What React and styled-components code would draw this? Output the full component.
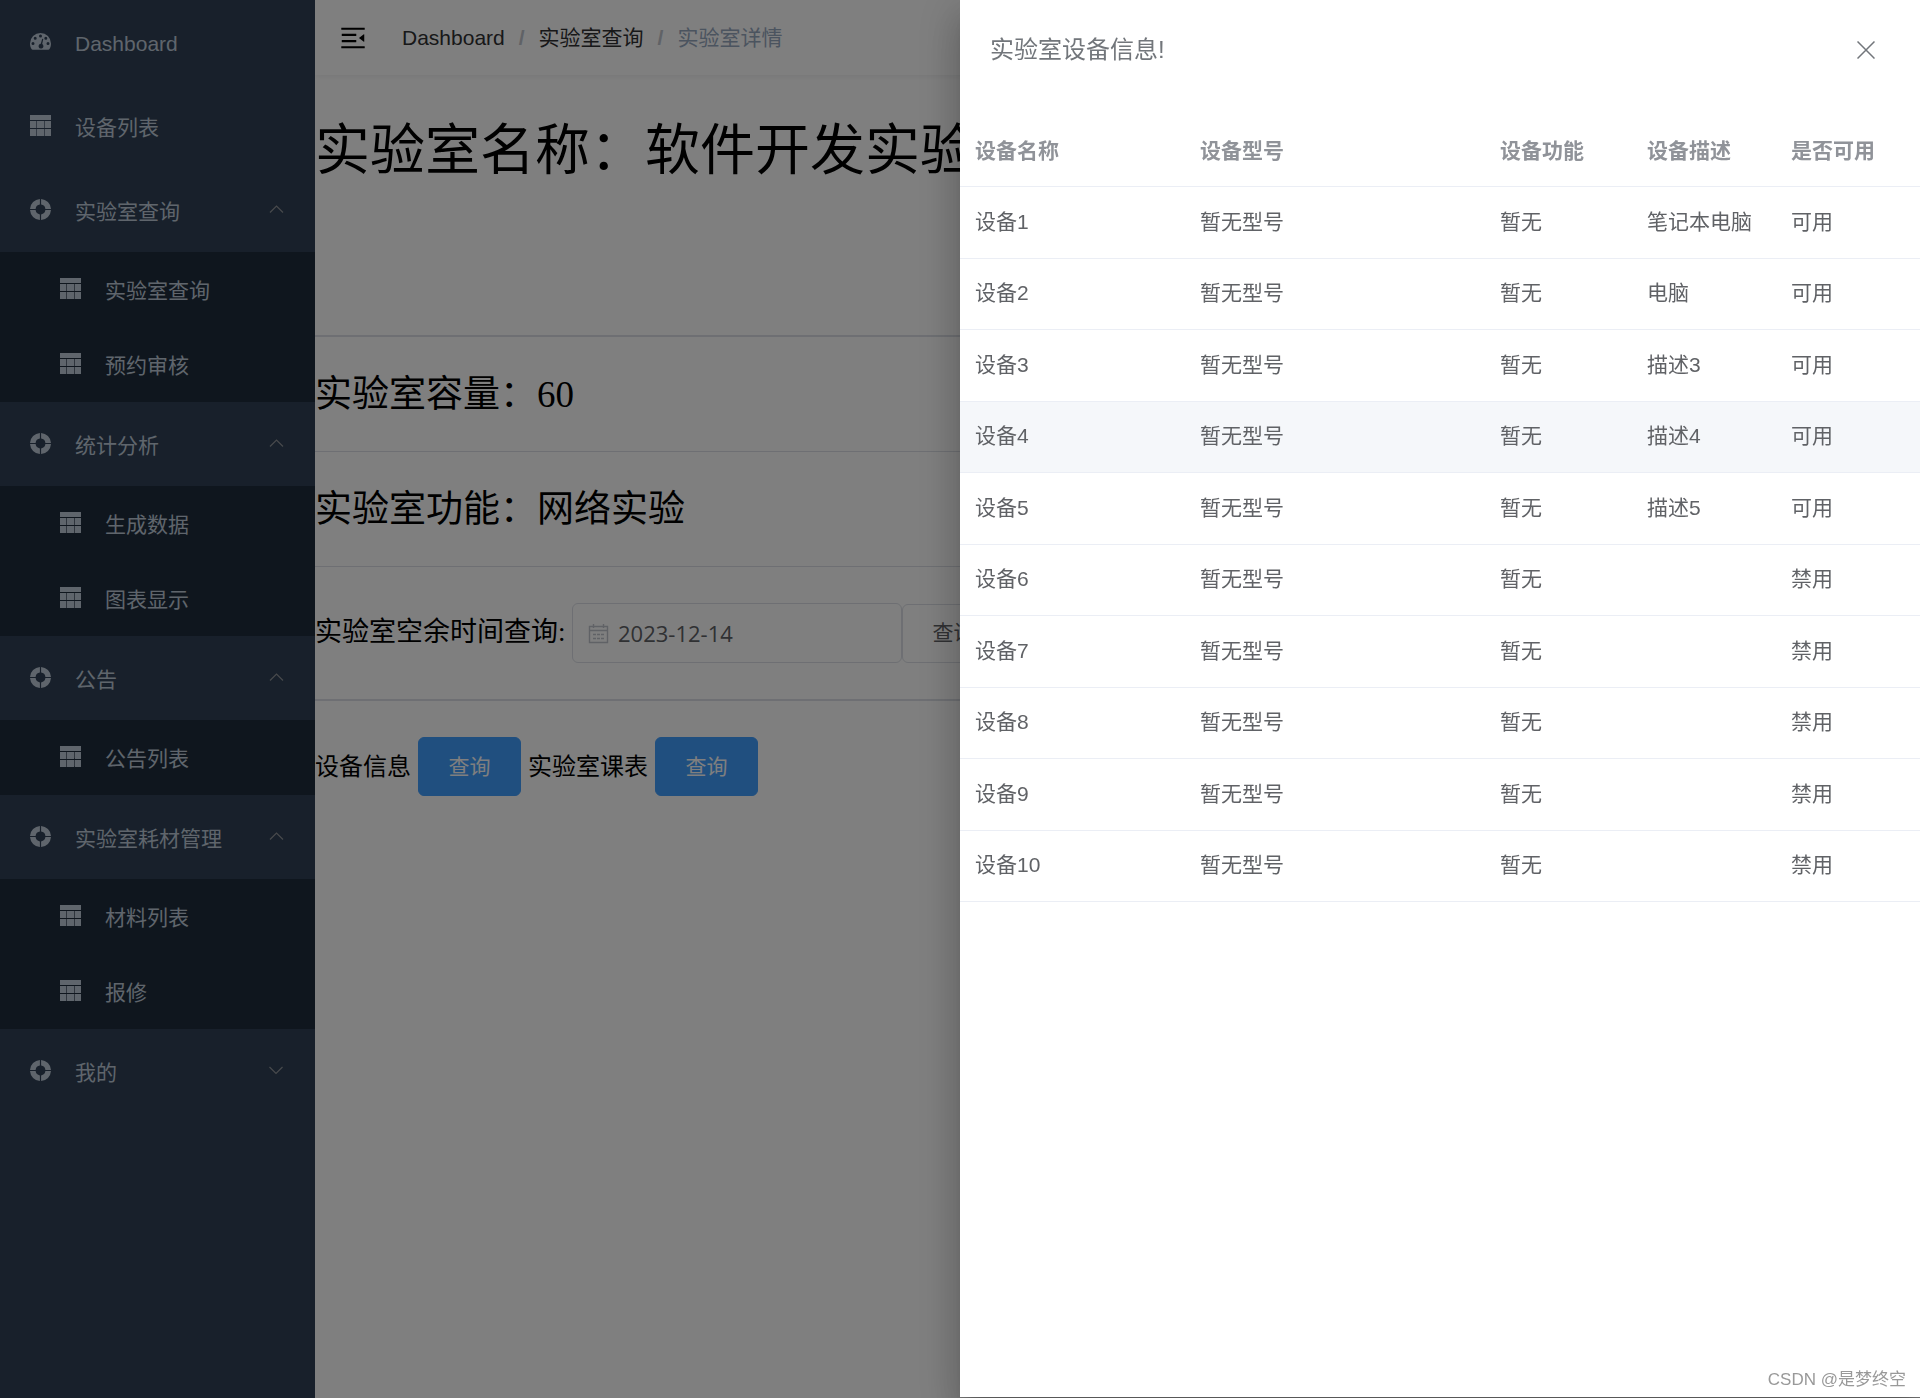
import React, { useState } from "react";
import styled, { createGlobalStyle, css } from "styled-components";

const menu = [
    { title: "Dashboard", icon: "dashboard" },
    { title: "设备列表", icon: "table" },
    { title: "实验室查询", icon: "help", open: true, children: ["实验室查询", "预约审核"] },
    { title: "统计分析", icon: "help", open: true, children: ["生成数据", "图表显示"] },
    { title: "公告", icon: "help", open: true, children: ["公告列表"] },
    { title: "实验室耗材管理", icon: "help", open: true, children: ["材料列表", "报修"] },
    { title: "我的", icon: "help", open: false, children: [] },
];

const devices = [
    { name: "设备1", model: "暂无型号", usage: "暂无", desc: "笔记本电脑", state: "可用" },
    { name: "设备2", model: "暂无型号", usage: "暂无", desc: "电脑", state: "可用" },
    { name: "设备3", model: "暂无型号", usage: "暂无", desc: "描述3", state: "可用" },
    { name: "设备4", model: "暂无型号", usage: "暂无", desc: "描述4", state: "可用", active: true },
    { name: "设备5", model: "暂无型号", usage: "暂无", desc: "描述5", state: "可用" },
    { name: "设备6", model: "暂无型号", usage: "暂无", desc: "", state: "禁用" },
    { name: "设备7", model: "暂无型号", usage: "暂无", desc: "", state: "禁用" },
    { name: "设备8", model: "暂无型号", usage: "暂无", desc: "", state: "禁用" },
    { name: "设备9", model: "暂无型号", usage: "暂无", desc: "", state: "禁用" },
    { name: "设备10", model: "暂无型号", usage: "暂无", desc: "", state: "禁用" },
];

//icons
function DashboardIcon() {
    return (
        <svg viewBox="0 0 21 21" width="21" height="21" fill="currentColor" aria-hidden="true">
            <path
                fillRule="evenodd"
                d="M10.5 2A10.5 10.5 0 0 0 0 12.5c0 2 .5 3.9 1.5 5.6.3.5.7.7 1.2.7h15.6c.5 0 .9-.2 1.2-.7 1-1.7 1.5-3.6 1.5-5.6A10.5 10.5 0 0 0 10.5 2zM10.5 3.6a1.5 1.5 0 1 1 0 3 1.5 1.5 0 0 1 0-3zM5.2 5.8a1.5 1.5 0 1 1 0 3 1.5 1.5 0 0 1 0-3zM15.8 5.8a1.5 1.5 0 1 1 0 3 1.5 1.5 0 0 1 0-3zM3 11a1.5 1.5 0 1 1 0 3 1.5 1.5 0 0 1 0-3zM18 11a1.5 1.5 0 1 1 0 3 1.5 1.5 0 0 1 0-3zM12.2 7.800l1.1.3-1.1 5a2.4 2.4 0 1 1-1.4-.3z"
            />
        </svg>
    );
}

function TableIcon() {
    return (
        <svg viewBox="0 0 21 21" width="21" height="21" fill="currentColor" aria-hidden="true">
            <path d="M0 0h21v5H0zM0 6h6.200v7H0zM6.800 6h7.400v7H6.800zM14.800 6H21v7h-6.200zM0 14h6.200v7H0zM6.800 14h7.400v7H6.800zM14.800 14H21v7h-6.200z" />
        </svg>
    );
}

function HelpIcon() {
    return (
        <svg viewBox="0 0 21 21" width="21" height="21" fill="currentColor" aria-hidden="true">
            <path d="M9.9 0v5.600A5 5 0 0 0 5.600 9.900H0A10.500 10.500 0 0 1 9.900 0zM11.100 0A10.500 10.500 0 0 1 21 9.900h-5.600a5 5 0 0 0-4.300-4.300zM0 11.100h5.600a5 5 0 0 0 4.300 4.300V21A10.500 10.500 0 0 1 0 11.100zM15.400 11.100H21a10.500 10.500 0 0 1-9.900 9.900v-5.600a5 5 0 0 0 4.300-4.300z" />
        </svg>
    );
}

function CalendarIcon() {
    return (
        <svg viewBox="0 0 21 21" width="21" height="21" fill="none" stroke="currentColor" strokeWidth="1.4" aria-hidden="true">
            <path d="M1.500 3.500h18v16h-18zM1.500 7.500h18M5.500 1v4M15.500 1v4" />
            <path d="M5 11.500h3M9 11.500h3M13 11.500h3M5 15.500h3M9 15.500h3M13 15.500h3" />
        </svg>
    );
}

function HamburgerIcon() {
    return (
        <svg viewBox="0 0 1024 1024" width="30" height="30" aria-hidden="true">
            <path
                transform="rotate(180 512 512)"
                d="M408 442h480c4.400 0 8-3.600 8-8v-56c0-4.400-3.600-8-8-8H408c-4.400 0-8 3.600-8 8v56c0 4.400 3.600 8 8 8zm-8 204c0 4.400 3.600 8 8 8h480c4.400 0 8-3.600 8-8v-56c0-4.400-3.600-8-8-8H408c-4.400 0-8 3.600-8 8v56zm504-486H120c-4.400 0-8 3.600-8 8v56c0 4.400 3.600 8 8 8h784c4.400 0 8-3.600 8-8v-56c0-4.400-3.600-8-8-8zm0 632H120c-4.400 0-8 3.600-8 8v56c0 4.400 3.600 8 8 8h784c4.400 0 8-3.600 8-8v-56c0-4.400-3.600-8-8-8zM142.400 642.100L298.700 519a8.840 8.840 0 0 0 0-13.900L142.400 381.900c-5.800-4.600-14.400-.5-14.400 6.900v246.300a8.900 8.900 0 0 0 14.400 7z"
            />
        </svg>
    );
}

function ArrowIcon({ open }) {
    return (
        <svg viewBox="0 0 18 18" width="18" height="18" fill="none" stroke="#909399" strokeWidth="1.2" aria-hidden="true">
            <path d={open ? "M3 12.500L9.500 6l6.500 6.500" : "M2.500 6L9 12.500 15.500 6"} />
        </svg>
    );
}

const icons = { dashboard: DashboardIcon, table: TableIcon, help: HelpIcon };

function Sidebar() {
    const [items, setItems] = useState(menu);

    const toggle = (title) => {
        setItems(items.map((item) => (item.title === title ? { ...item, open: !item.open } : item)));
    };

    return (
        <SidebarStyled>
            {items.map((item) => {
                const Icon = icons[item.icon];
                return item.children ? (
                    <React.Fragment key={item.title}>
                        <MenuItem as="button" type="button" aria-expanded={item.open} onClick={() => toggle(item.title)}>
                            <Icon />
                            <span>{item.title}</span>
                            <ArrowIcon open={item.open} />
                        </MenuItem>
                        {item.open &&
                            item.children.map((child) => (
                                <MenuItem key={child} href="#" $nested>
                                    <TableIcon />
                                    <span>{child}</span>
                                </MenuItem>
                            ))}
                    </React.Fragment>
                ) : (
                    <MenuItem key={item.title} href="#">
                        <Icon />
                        <span>{item.title}</span>
                    </MenuItem>
                );
            })}
        </SidebarStyled>
    );
}

function LabDetail() {
    const [date, setDate] = useState("2023-12-14");

    return (
        <main>
            <LabTitle>实验室名称：软件开发实验室</LabTitle>
            <LabInfo>实验室容量：60</LabInfo>
            <LabInfo>实验室功能：网络实验</LabInfo>
            <FreeTime>
                <label htmlFor="date">实验室空余时间查询:</label>
                <DateBox>
                    <CalendarIcon />
                    <input id="date" type="text" value={date} onChange={(e) => setDate(e.target.value)} />
                </DateBox>
                <Button type="button">查询</Button>
            </FreeTime>
            <Actions>
                <span>设备信息</span>
                <Button type="button" $primary>查询</Button>
                <span>实验室课表</span>
                <Button type="button" $primary>查询</Button>
            </Actions>
        </main>
    );
}

function DeviceDrawer() {
    return (
        <Drawer role="dialog" aria-labelledby="drawer-title">
            <DrawerHeader>
                <h2 id="drawer-title">实验室设备信息!</h2>
                <button type="button" aria-label="close">
                    <svg viewBox="0 0 18 18" width="18" height="18" stroke="currentColor" strokeWidth="1.5">
                        <path d="M.5.5l17 17M17.500.5l-17 17" />
                    </svg>
                </button>
            </DrawerHeader>
            <DeviceTable>
                <thead>
                    <tr>
                        <th>设备名称</th>
                        <th>设备型号</th>
                        <th>设备功能</th>
                        <th>设备描述</th>
                        <th>是否可用</th>
                    </tr>
                </thead>
                <tbody>
                    {devices.map((device) => (
                        <DeviceRow key={device.name} $active={device.active}>
                            <td>{device.name}</td>
                            <td>{device.model}</td>
                            <td>{device.usage}</td>
                            <td>{device.desc}</td>
                            <td>{device.state}</td>
                        </DeviceRow>
                    ))}
                </tbody>
            </DeviceTable>
            <Watermark>CSDN @是梦终空</Watermark>
        </Drawer>
    );
}

export default function App() {
    return (
        <>
            <GlobalStyle />
            <Layout>
                <Sidebar />
                <Content>
                    <Navbar>
                        <button type="button" aria-label="menu">
                            <HamburgerIcon />
                        </button>
                        <Breadcrumb>
                            <a href="#">Dashboard</a>
                            <b>/</b>
                            <a href="#">实验室查询</a>
                            <b>/</b>
                            <span>实验室详情</span>
                        </Breadcrumb>
                    </Navbar>
                    <LabDetail />
                </Content>
            </Layout>
            <Overlay>
                <DeviceDrawer />
            </Overlay>
        </>
    );
}

const GlobalStyle = createGlobalStyle`
    * {
        box-sizing: border-box;
    }

    body {
        margin: 0;
        font-family: "Liberation Sans", "Noto Sans CJK SC", sans-serif;
        font-size: 21px;
        line-height: 30px;
        background: #fff;
    }

    button, input {
        font: inherit;
        color: inherit;
    }

    a {
        color: inherit;
        text-decoration: none;
    }

    svg {
        display: block;
        flex: none;
    }
`;

const Layout = styled.div`
    display: flex;
    min-height: 100vh;
`;

const SidebarStyled = styled.nav`
    width: 315px;
    flex: none;
    background: #304156;
    color: #bfcbd9;
`;

const MenuItem = styled.a`
    display: flex;
    align-items: center;
    gap: 24px;
    width: 100%;
    height: 84px;
    padding: 0 30px;
    border: none;
    background: none;
    text-align: left;
    cursor: pointer;

    svg {
        margin-bottom: 2px;
    }

    span {
        flex: 1;
        padding-top: 3px;
    }

    ${({ $nested }) =>
        $nested &&
        css`
            height: 75px;
            padding-left: 60px;
            background: #1f2d3d;
        `}
`;

const Content = styled.div`
    flex: 1;
    min-width: 0;
    overflow: hidden;
`;

const Navbar = styled.header`
    display: flex;
    align-items: center;
    height: 75px;
    box-shadow: 0 1px 6px rgba(0, 21, 41, 0.08);

    button {
        padding: 0 23px;
        border: none;
        background: none;
    }
`;

const Breadcrumb = styled.nav`
    display: flex;
    gap: 14px;
    padding-left: 11px;
    color: #303133;

    b {
        color: #c0c4cc;
    }

    span {
        color: #97a8be;
    }
`;

const serif = css`
    font-family: "Liberation Serif", "Noto Sans CJK SC", serif;
    font-weight: 400;
    color: #000;
`;

const LabTitle = styled.h1`
    ${serif}
    height: 262px;
    margin: 0;
    padding-top: 36px;
    border-bottom: 2px solid #dcdfe6;
    font-size: 55px;
    line-height: 80px;
    white-space: nowrap;
`;

const LabInfo = styled.p`
    ${serif}
    margin: 0;
    padding: 33px 0 31px;
    border-bottom: 1px solid #dcdfe6;
    font-size: 37px;
    line-height: 50px;
    white-space: nowrap;
`;

const FreeTime = styled.div`
    display: flex;
    align-items: center;
    padding: 36px 0;
    border-bottom: 2px solid #dcdfe6;

    label {
        ${serif}
        width: 257px;
        flex: none;
        padding-bottom: 3px;
        font-size: 27px;
        white-space: nowrap;
    }
`;

const DateBox = styled.div`
    display: flex;
    align-items: center;
    gap: 9px;
    width: 330px;
    height: 60px;
    padding: 0 15px;
    border: 1px solid #dcdfe6;
    border-radius: 6px;
    color: #c0c4cc;

    input {
        width: 100%;
        min-width: 0;
        padding: 0;
        border: none;
        outline: none;
        background: none;
        font-family: "Open Sans", "Noto Sans", sans-serif;
        font-size: 22px;
        color: #606266;
    }
`;

const Button = styled.button`
    flex: none;
    width: 103px;
    height: 59px;
    border: 1px solid #dcdfe6;
    border-radius: 6px;
    background: #fff;
    color: #606266;

    ${({ $primary }) =>
        $primary &&
        css`
            border-color: #409eff;
            background: #409eff;
            color: #fff;
        `}
`;

const Actions = styled.div`
    display: flex;
    align-items: center;
    gap: 7px;
    padding: 36px 0;
    color: #000;
    font-size: 24px;

    button {
        font-size: 21px;
    }
`;

const Overlay = styled.div`
    position: fixed;
    inset: 0;
    display: flex;
    justify-content: flex-end;
    padding-bottom: 1px;
    background: rgba(0, 0, 0, 0.5);
`;

const Drawer = styled.section`
    display: flex;
    flex-direction: column;
    width: 50%;
    background: #fff;
    box-shadow: 0 12px 15px -8px rgba(0, 0, 0, 0.2), 0 24px 36px 3px rgba(0, 0, 0, 0.14),
        0 9px 42px 8px rgba(0, 0, 0, 0.12);
`;

const DrawerHeader = styled.header`
    display: flex;
    align-items: center;
    justify-content: space-between;
    padding: 30px 45px 45px 30px;
    color: #72767b;

    h2 {
        margin: 0;
        font-size: 24px;
        font-weight: 400;
        line-height: 40px;
    }

    button {
        padding: 0;
        border: none;
        background: none;
    }
`;

const DeviceTable = styled.table`
    width: 100%;
    table-layout: fixed;
    border-collapse: separate;
    border-spacing: 0;
    color: #606266;

    th,
    td {
        height: 72px;
        padding: 0 15px;
        border-bottom: 1px solid #ebeef5;
        text-align: left;
        line-height: 34px;
        white-space: nowrap;
    }

    td {
        padding-bottom: 2px;
    }

    th {
        color: #909399;
        font-weight: 700;
    }

    th:nth-child(1) {
        width: 225px;
    }

    th:nth-child(2) {
        width: 300px;
    }

    th:nth-child(3) {
        width: 147px;
    }
`;

const DeviceRow = styled.tr`
    background: ${({ $active }) => ($active ? "#f5f7fa" : "#fff")};

    &:nth-child(even) td {
        height: 71px;
    }
`;

const Watermark = styled.footer`
    margin-top: auto;
    padding: 0 14px 4px;
    color: #999;
    font-size: 17px;
    line-height: 26px;
    text-align: right;
    text-shadow: 1px 1px 0 #fff;
`;
